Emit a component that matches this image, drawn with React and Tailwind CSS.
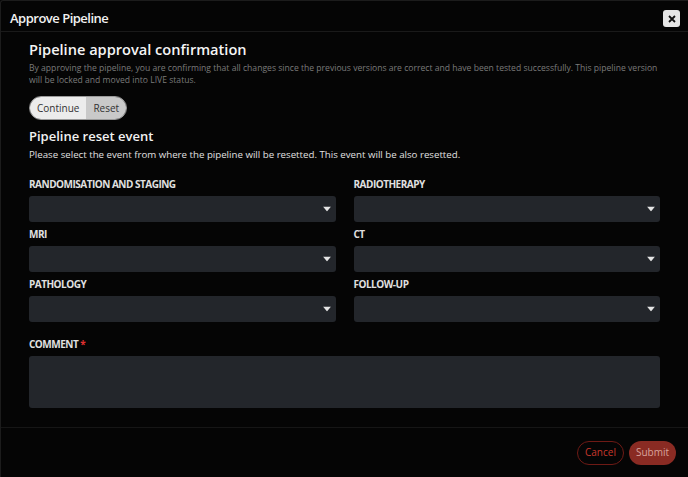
import React from "react";

function Caret() {
  return (
    <svg width="8" height="5" viewBox="0 0 8 5" className="absolute right-[5px] top-1/2 -translate-y-1/2">
      <path d="M0 0 H8 L4 5 Z" fill="#e5e5e5" />
    </svg>
  );
}

function Select({ label }) {
  return (
    <div className="flex flex-col">
      <div className="text-[10px] font-bold text-[#e0e0e0] leading-[14px] h-[14px] mb-[5px] tracking-[-0.5px]">{label}</div>
      <div className="relative h-[26px] rounded-[3px] bg-[#23262b]">
        <Caret />
      </div>
    </div>
  );
}

export default function App() {
  return (
    <div className="w-[688px] h-[477px] bg-[#050505] text-white overflow-hidden" style={{ fontFamily: '"Open Sans", "Noto Sans", sans-serif' }}>
      <div className="h-full border-l border-t border-[#1c1c1c] rounded-tl-[3px] flex flex-col">
        <div className="h-[31px] flex items-center justify-between pt-[5px] pl-[9px] pr-[8px] border-b border-[#1a1a1a]">
          <div className="text-[13px] font-semibold tracking-[-0.5px] text-[#f2f2f2]">Approve Pipeline</div>
          <button className="w-[17px] h-[17px] rounded-[3px] bg-[#e6e6e6] flex items-center justify-center">
            <svg width="8" height="8" viewBox="0 0 8 8">
              <path d="M1 1 L7 7 M7 1 L1 7" stroke="#111" strokeWidth="1.8" />
            </svg>
          </button>
        </div>
        <div className="px-[28px] pt-[7px] flex-1">
          <div className="text-[14.6px] font-semibold leading-[20px] text-[#f5f5f5]">Pipeline approval confirmation</div>
          <div className="mt-[3px] text-[8.6px] leading-[12px] text-[#7a7a7a]">
            By approving the pipeline, you are confirming that all changes since the previous versions are correct and have been tested successfully. This pipeline version will be locked and moved into LIVE status.
          </div>
          <div className="mt-[10px] inline-flex h-[24px] rounded-full border-[1.5px] border-[#9a9a9a] overflow-hidden text-[10px] text-[#333]">
            <div className="bg-[#ececec] px-[7px] flex items-center">Continue</div>
            <div className="bg-[#c9c9c9] px-[7px] flex items-center">Reset</div>
          </div>
          <div className="mt-[7px] text-[13px] font-semibold leading-[18px] text-[#f2f2f2]">Pipeline reset event</div>
          <div className="mt-[3px] text-[9.7px] leading-[14px] text-[#e0e0e0]">
            Please select the event from where the pipeline will be resetted. This event will be also resetted.
          </div>
          <div className="mt-[15px] grid grid-cols-2 gap-x-[18px] gap-y-[5px]">
            <Select label="RANDOMISATION AND STAGING" />
            <Select label="RADIOTHERAPY" />
            <Select label="MRI" />
            <Select label="CT" />
            <Select label="PATHOLOGY" />
            <Select label="FOLLOW-UP" />
          </div>
          <div className="mt-[15px] text-[10px] font-bold text-[#e0e0e0] leading-[14px] tracking-[-0.5px]">
            COMMENT <span className="text-[#e03030]">*</span>
          </div>
          <div className="mt-[5px] h-[52px] rounded-[3px] bg-[#23262b]" />
        </div>
        <div className="h-[50px] border-t border-[#161616] flex items-center justify-end gap-[5px] pr-[12px]">
          <button className="h-[24px] px-[7px] rounded-full border border-[#6e1a15] text-[10px] text-[#c8382c]">Cancel</button>
          <button className="h-[24px] px-[7px] rounded-full bg-[#8a2b23] text-[10px] text-[#d8a39c]">Submit</button>
        </div>
      </div>
    </div>
  );
}
